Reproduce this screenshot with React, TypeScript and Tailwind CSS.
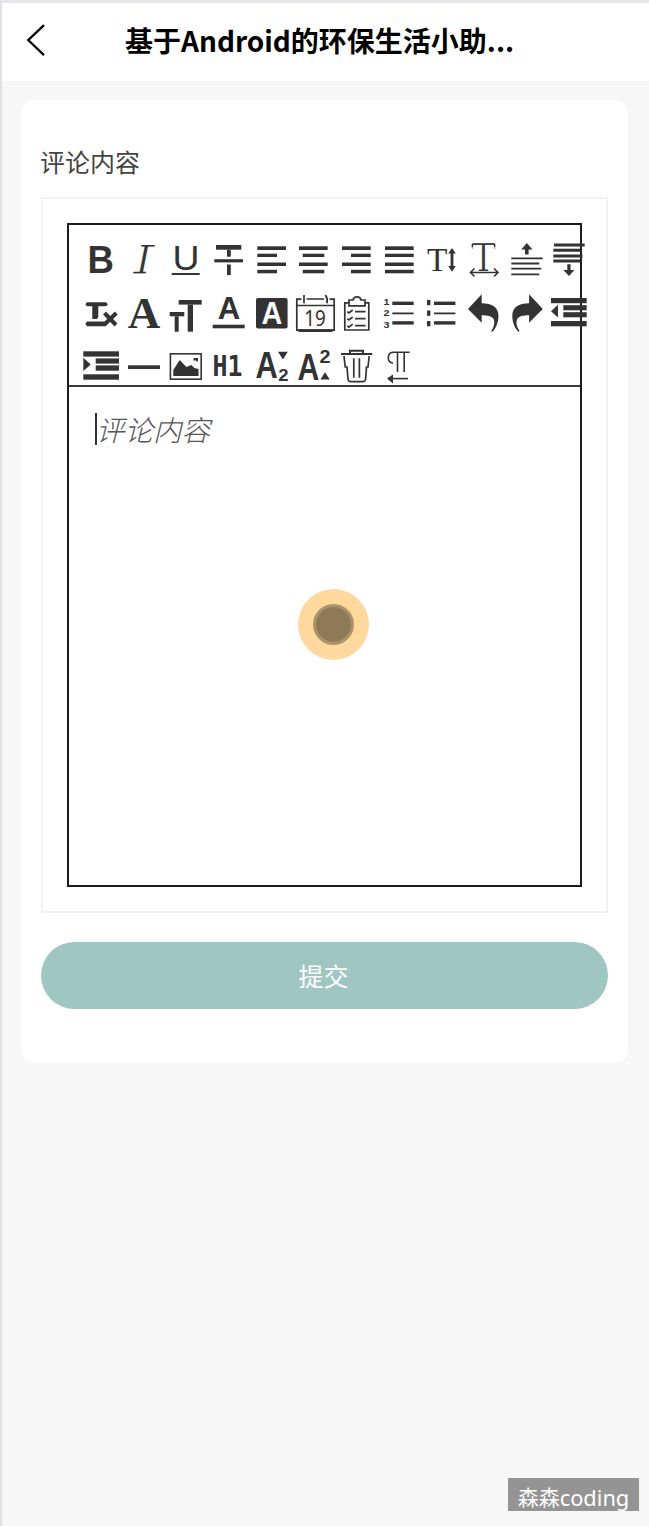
import React from "react";

type GlyphProps = {
  x: number;
  y: number;
  size: number;
  len: number;
  children: string;
  className?: string;
};

const SANS = "font-['Liberation_Sans']";
const SERIF = "font-['Liberation_Serif']";
const THIN = "stroke-white stroke-[0.9px]";

function Glyph({ x, y, size, len, children, className = SANS }: GlyphProps) {
  return (
    <text x={x} y={y} fontSize={size} textLength={len} lengthAdjust="spacingAndGlyphs" className={className}>
      {children}
    </text>
  );
}

function Bars({ rows }: { rows: [number, number, number, number][] }) {
  return (
    <>
      {rows.map(([x1, y1, x2, y2], i) => (
        <rect key={i} x={x1} y={y1} width={x2 - x1} height={y2 - y1} />
      ))}
    </>
  );
}

function Stroke({ d, w = 1.6 }: { d: string; w?: number }) {
  return <path d={d} fill="none" stroke="currentColor" strokeWidth={w} />;
}

const undoShape = "M4 22 L17.7 7.3 V16.3 C28 16.5 34.5 20 34.5 29 C34.5 36 31.5 42 28 45 L27.3 44 C30 40 31 36 30 33 C28.5 29 23 28.3 17.7 28.3 V35.8 Z";

const tools: { name: string; icon: React.ReactNode }[] = [
  { name: "bold", icon: <Glyph x={7.6} y={39.4} size={38.5} len={26.5} className={`${SANS} font-bold`}>B</Glyph> },
  {
    name: "italic",
    icon: (
      <>
        <Glyph x={12} y={39.2} size={42} len={16} className={`${SERIF} italic ${THIN}`}>I</Glyph>
        <Bars rows={[[18.5, 11, 31.7, 12.6], [10.3, 37.8, 22.5, 39.4]]} />
      </>
    ),
  },
  {
    name: "underline",
    icon: (
      <>
        <Glyph x={7.4} y={35.8} size={35.5} len={27}>U</Glyph>
        <Bars rows={[[6.7, 39, 34.7, 41]]} />
      </>
    ),
  },
  { name: "strike", icon: <Bars rows={[[8, 11, 33.3, 15.7], [6.3, 25.2, 35, 28.4], [19, 15.7, 22.8, 22.7], [19, 30.5, 22.8, 41]]} /> },
  { name: "align-left", icon: <Bars rows={[[6.3, 12.3, 35, 16], [6.3, 19.7, 26, 23], [6.3, 28.5, 35, 32], [6.3, 35.8, 26, 39.3]]} /> },
  { name: "align-center", icon: <Bars rows={[[6, 12.3, 34.7, 16], [9.7, 19.7, 31.3, 23], [6, 28.5, 34.7, 32], [9.7, 35.8, 31.3, 39.3]]} /> },
  { name: "align-right", icon: <Bars rows={[[6, 12.3, 34.7, 16], [15, 19.7, 34.7, 23], [6, 28.5, 34.7, 32], [15, 35.8, 34.7, 39.3]]} /> },
  { name: "align-justify", icon: <Bars rows={[[6, 12.3, 34.7, 16], [6, 19.7, 34.7, 23], [6, 28.5, 34.7, 32], [6, 35.8, 34.7, 39.3]]} /> },
  {
    name: "line-height",
    icon: (
      <>
        <Glyph x={6} y={37.3} size={34} len={20.4} className={SERIF}>T</Glyph>
        <Stroke d="M31 18 V34" w={2.8} />
        <path d="M31 14 L34.8 19.5 H27.2 Z M31 37.7 L34.8 32 H27.2 Z" />
      </>
    ),
  },
  {
    name: "letter-spacing",
    icon: (
      <>
        <Glyph x={7} y={37} size={42} len={25} className={`${SERIF} ${THIN}`}>T</Glyph>
        <Bars rows={[[8.5, 9.3, 30.5, 10.9], [7.7, 10, 9, 13], [30, 10, 31.3, 13], [15, 35.6, 24, 37]]} />
        <Stroke d="M6.5 38.5 H34 M10.5 34.5 L6.5 38.5 L10.5 42.5 M30 34.5 L34 38.5 L30 42.5" />
      </>
    ),
  },
  {
    name: "margin-top",
    icon: (
      <>
        <path d="M19.8 9 L25.5 15.5 H21.6 V20.5 H18 V15.5 H14.2 Z" />
        <Stroke d="M4.3 24.3 H35.7 M4.3 29.5 H32.3 M4.3 34.6 H34.3 M4.3 40.3 H32.3" w={1.8} />
      </>
    ),
  },
  {
    name: "margin-bottom",
    icon: (
      <>
        <Stroke d="M5 11 H35.7 M4.3 16.2 H31.5 M4.3 21.9 H33.5 M4.3 27 H31.5" w={3} />
        <path d="M20 42 L25.4 36 H21.6 V30.3 H18.3 V36 H14.3 Z" />
      </>
    ),
  },
  {
    name: "clear-format",
    icon: (
      <>
        <path d="M7 15.3 H26 L28 17.2 L26 19.2 H18.3 V30 L17 32 H12.3 V19.2 H7 L5.3 17.2 Z" />
        <path d="M7 34.5 H24.5 L26 36.8 L24.5 39.2 H7 L5.3 36.8 Z" />
        <Stroke d="M24.5 26 L36 38 M36.3 26 L24 38" w={4} />
      </>
    ),
  },
  { name: "font-family", icon: <Glyph x={4.7} y={41.2} size={45} len={32.6} className={`${SERIF} font-bold`}>A</Glyph> },
  { name: "font-size", icon: <Bars rows={[[13.7, 13, 36.7, 17.6], [22.7, 17.6, 28, 44.7], [4.7, 25, 19.3, 29.3], [9.7, 29.3, 13.7, 44.7]]} /> },
  {
    name: "color",
    icon: (
      <>
        <Glyph x={9.8} y={32} size={30.5} len={22.5} className={`${SANS} font-bold`}>A</Glyph>
        <Bars rows={[[4.7, 37.7, 36.7, 41.3]]} />
      </>
    ),
  },
  {
    name: "background",
    icon: (
      <>
        <rect x="5" y="11" width="31.6" height="30.5" rx="2" />
        <Glyph x={10.4} y={37.3} size={30.5} len={20.8} className={`${SANS} font-bold fill-white`}>A</Glyph>
      </>
    ),
  },
  {
    name: "date",
    icon: (
      <>
        <Stroke d="M8.5 12.2 H3.8 V43.2 H41.2 V12.2 H36.5 M13.5 12 H31 M11 8 V16.3 M32.5 8 Q35 12 34 16.3 M3.8 18.5 H41.2" w={1.7} />
        <Stroke d="M5.5 43.6 H39.5" w={2.6} />
        <Glyph x={11.2} y={39.2} size={21.5} len={21.5} className="font-['Noto_Sans']">19</Glyph>
      </>
    ),
  },
  {
    name: "check-list",
    icon: (
      <Stroke
        d="M13 15.8 H8.8 V43 H32.8 V15.8 H28.6 M13 18.8 V13 H17 Q17.5 9.8 21 9.8 Q24.5 9.8 25 13 H29 V18.8 Z M11.3 24.6 L13 26 L16.7 23 M11.3 31.6 L13 33 L16.7 30 M11.3 38.8 L13 40.2 L16.7 37.2 M19 24.6 H29.6 M19 31.6 H29.6 M19 38.6 H29.6"
        w={1.7}
      />
    ),
  },
  {
    name: "ordered-list",
    icon: (
      <>
        <Bars rows={[[13.3, 14.6, 34.7, 18], [13.3, 25.5, 34.7, 27.3], [13.3, 34.2, 34.7, 37.6]]} />
        <Glyph x={4.4} y={18} size={9.5} len={6} className={`${SANS} font-bold`}>1</Glyph>
        <Glyph x={4.4} y={28.8} size={9.5} len={6} className={`${SANS} font-bold`}>2</Glyph>
        <Glyph x={4.4} y={41} size={9.5} len={6} className={`${SANS} font-bold`}>3</Glyph>
      </>
    ),
  },
  {
    name: "bullet-list",
    icon: <Bars rows={[[6, 12.9, 9.4, 18.2], [6, 23.5, 9.4, 28.8], [6, 34, 9.4, 39.3], [13, 14.6, 34.4, 18], [13, 25.5, 34.4, 27.3], [13, 34.2, 34.4, 37.6]]} />,
  },
  { name: "undo", icon: <path d={undoShape} /> },
  { name: "redo", icon: <path d={undoShape} transform="translate(39.8 0) scale(-1 1)" /> },
  {
    name: "outdent",
    icon: (
      <>
        <Bars rows={[[2, 11, 37.7, 16.2], [14.3, 18.2, 37.7, 23.3], [14.3, 25.2, 37.7, 30.3], [2, 34, 37.7, 39.3]]} />
        <path d="M2 24.3 L9 17.8 V30.6 Z" />
      </>
    ),
  },
  {
    name: "indent",
    icon: (
      <>
        <Bars rows={[[3.3, 11.3, 39, 16.6], [15.7, 18.4, 39, 23.6], [15.7, 25.4, 39, 30.7], [3.3, 34.3, 39, 39.7]]} />
        <path d="M10.8 24.4 L3.3 17.8 V31 Z" />
      </>
    ),
  },
  { name: "divider", icon: <Bars rows={[[5, 25.3, 37, 29]]} /> },
  {
    name: "image",
    icon: (
      <>
        <rect x="5.4" y="13.8" width="30.8" height="25.4" fill="none" stroke="currentColor" strokeWidth="1.6" />
        <path d="M8.3 36 V30 L14.7 20 L21.5 27 L26.3 25 L29.5 28 L33.5 29 V36 Z M28.5 18 H33 V22 L31 20.5 H28.5 Z" />
      </>
    ),
  },
  { name: "heading", icon: <Glyph x={4.6} y={36} size={29} len={30} className="font-['DejaVu_Sans_Mono'] font-bold">H1</Glyph> },
  {
    name: "subscript",
    icon: (
      <>
        <Glyph x={4.5} y={37.7} size={37} len={22.3} className={`${SANS} font-bold`}>A</Glyph>
        <path d="M27 11.7 H36.8 L32 19.5 Z" />
        <Glyph x={27.2} y={41} size={16.5} len={10.3} className={`${SANS} font-bold`}>2</Glyph>
      </>
    ),
  },
  {
    name: "superscript",
    icon: (
      <>
        <Glyph x={4.5} y={39.6} size={37} len={21.8} className={`${SANS} font-bold`}>A</Glyph>
        <Glyph x={26.6} y={22.6} size={18} len={11} className={`${SANS} font-bold`}>2</Glyph>
        <path d="M27.5 39.4 H36.8 L32 32.3 Z" />
      </>
    ),
  },
  {
    name: "trash",
    icon: (
      <>
        <Stroke d="M5 14 H36.2 M14 14 V10.8 H27 V14" w={2} />
        <Stroke d="M8 16 L9.2 27 H11 L12 39 Q12.3 41.6 14.5 41.6 H27 Q29.3 41.6 29.6 39 L30.5 27 H32 L33.2 16 M17.8 18.3 V37.7 M23.4 18.3 V37.7" w={1.7} />
      </>
    ),
  },
  {
    name: "direction",
    icon: (
      <>
        <Stroke d="M30.7 12.2 H14 Q9.3 12.6 9.3 17.6 Q9.3 22.8 14 23.2 M18.5 12 V32 M25.2 12 V32" />
        <Stroke d="M9 38.6 H29" />
        <path d="M8 38.6 L14 34.5 V43.5 Z" />
      </>
    ),
  },
];

function Toolbar() {
  return (
    <div className="grid h-[160px] w-[523px] shrink-0 grid-cols-[repeat(12,42.67px)] grid-rows-[repeat(3,53px)] pt-[9px] pl-[11px] text-[#333333]">
      {tools.map((tool) => (
        <button key={tool.name} className="block" aria-label={tool.name}>
          <svg viewBox="0 0 42.67 53" width="42.67" height="53" fill="currentColor" className="overflow-visible">
            {tool.icon}
          </svg>
        </button>
      ))}
    </div>
  );
}

export default function App() {
  return (
    <div className="relative flex h-[1526px] w-full flex-col border-t-[3px] border-l-2 border-t-[#e6e6eb] border-l-[#e1e1e4] bg-[#f7f7f7] font-['Noto_Sans_CJK_SC',sans-serif]">
      <header className="flex h-[78px] shrink-0 items-center bg-white">
        <svg width="60" height="60" viewBox="0 0 60 60" className="shrink-0 text-black">
          <path d="M42 7.5 L26.2 22.5 L42 37.5" transform="translate(0 5.6)" fill="none" stroke="currentColor" strokeWidth="2.2" />
        </svg>
        <h1 className="mb-[4px] ml-[63px] flex text-[28px] leading-[40px] font-bold whitespace-nowrap text-black">
          基于Android的环保生活小助...
        </h1>
      </header>

      <main className="mt-[19px] mr-[21px] ml-[19px] flex h-[963px] shrink-0 flex-col rounded-[13px] bg-white px-5 pt-[41px]">
        <label className="-ml-px h-[56px] shrink-0 text-[25px] leading-[41px] text-[#444444]">评论内容</label>
        <section className="h-[716px] w-[567px] shrink-0 border-2 border-[#f2f2f2] pt-6 pl-6">
          <div className="flex h-[664px] w-[515px] flex-col border-2 border-[#1c1c1c]">
            <Toolbar />
            <div className="flex-1 border-t-2 border-[#3a3a3a] pt-[26px] pl-[26px]">
              <div className="flex h-[32px] w-fit items-center border-l-2 border-[#333333] text-[28.5px] leading-[32px] font-light text-[#555555] italic">
                <span className="-ml-px">评论内容</span>
              </div>
            </div>
          </div>
        </section>
        <button className="mt-[29px] flex h-[67px] w-[567px] shrink-0 items-center justify-center rounded-full bg-[#a0c6c2] pr-[2px] text-[25px] text-white">
          提交
        </button>
      </main>

      <div className="absolute top-[586px] left-[296px] flex size-[71px] items-center justify-center rounded-full bg-[#ffd89e]">
        <div className="size-[41px] rounded-full border-[3px] border-[#ab946b] bg-[#8f7a58]" />
      </div>

      <div className="absolute right-[10px] bottom-[15px] flex h-[33px] w-[131px] items-center justify-center bg-[#949494] pt-[7px] font-['Noto_Sans','Noto_Sans_CJK_SC',sans-serif] text-[21px] whitespace-nowrap text-white">
        森森<span className="text-[21.8px]">coding</span>
      </div>
    </div>
  );
}
